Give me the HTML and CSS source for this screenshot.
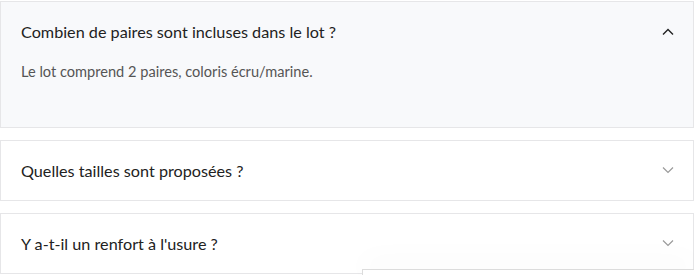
FILE: index.html
```html
<!doctype html>
<html>
  <head>
    <title>FAQ</title>
    <link rel="stylesheet" href="styles.css">
  </head>
  <body>
    <div class="faq">
      <div class="faq-item open">
        <div class="faq-question">
          <span>Combien de paires sont incluses dans le lot ?</span>
          <svg class="chevron" width="12" height="7" viewBox="0 0 12 7">
            <path d="M1 6.5 L6 1.5 L11 6.5" />
          </svg>
        </div>
        <div class="faq-answer">Le lot comprend 2 paires, coloris écru/marine.</div>
      </div>

      <div class="faq-item">
        <div class="faq-question">
          <span>Quelles tailles sont proposées ?</span>
          <svg class="chevron" width="12" height="7" viewBox="0 0 12 7">
            <path d="M1 0.5 L6 5.5 L11 0.5" />
          </svg>
        </div>
      </div>

      <div class="faq-item">
        <div class="faq-question">
          <span>Y a-t-il un renfort à l'usure ?</span>
          <svg class="chevron" width="12" height="7" viewBox="0 0 12 7">
            <path d="M1 0.5 L6 5.5 L11 0.5" />
          </svg>
        </div>
      </div>
    </div>
    <div class="floating-box"></div>
  </body>
</html>
```

FILE: styles.css
```css
:root {
  --border: #e6e6e8;
  --open-bg: #f8f9fb;
  --text: #222222;
  --text-secondary: #555555;
  --chevron: #9a9a9a;
}

body {
  margin: 0;
  padding-top: 1px;
  font-family: Lato, 'Noto Sans', sans-serif;
  background: #ffffff;
  color: var(--text);
  overflow: hidden;
  height: 274px;
}

.faq {
  display: flex;
  flex-direction: column;
  gap: 12px;
  width: 694px;
}

.faq-item {
  border: 1px solid var(--border);
  background: #ffffff;
}

.faq-item.open {
  background: var(--open-bg);
}

.faq-question {
  display: flex;
  align-items: center;
  justify-content: space-between;
  padding: 18px 19px 18px 20px;
  line-height: 23px;
  font-size: 16.2px;
}

.chevron {
  fill: none;
  stroke: var(--chevron);
  stroke-width: 1.2;
}

.open .chevron {
  stroke: #222222;
  stroke-width: 1.4;
}

.faq-answer {
  padding: 0 20px 44px;
  font-size: 14.6px;
  line-height: 22px;
  color: var(--text-secondary);
}

.floating-box {
  position: absolute;
  left: 362px;
  right: 0;
  top: 269px;
  height: 6px;
  background: #ffffff;
  border-top: 1px solid #dcdcdc;
  border-left: 1px solid #dcdcdc;
  box-shadow: 0 -6px 30px rgba(0, 0, 0, 0.06);
}
```
